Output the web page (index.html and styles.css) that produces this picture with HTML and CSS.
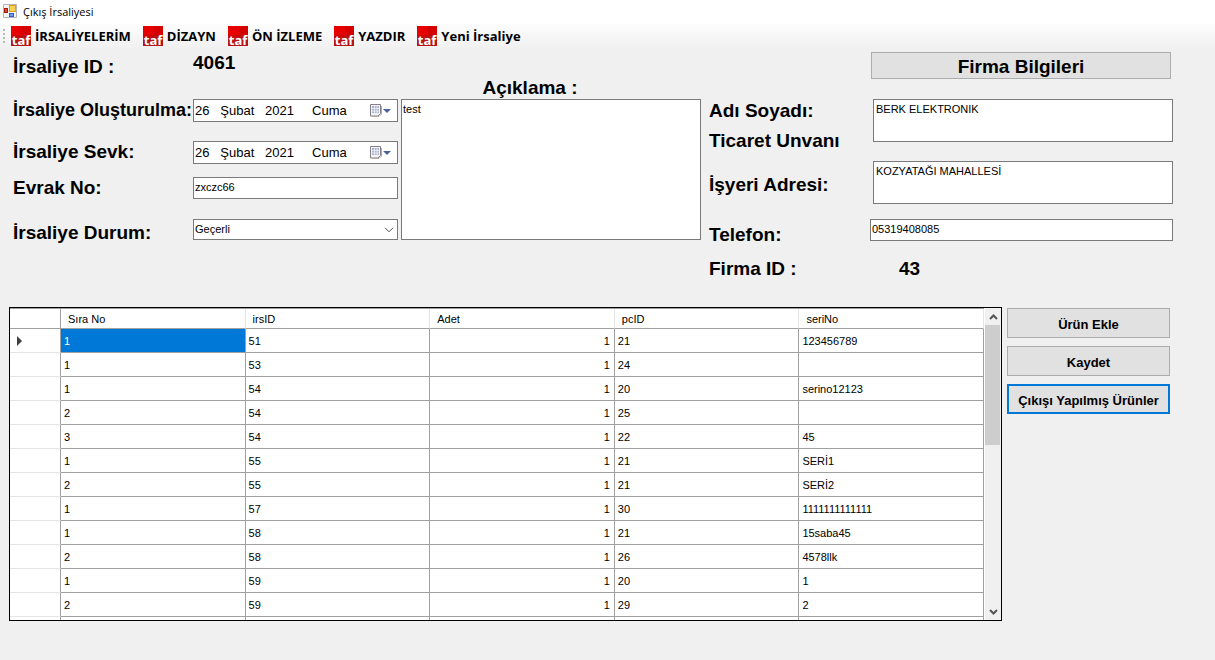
FILE: index.html
```
<!DOCTYPE html>
<html lang="tr">
<head>
<meta charset="utf-8">
<title>Çıkış İrsaliyesi</title>
<link rel="stylesheet" href="styles.css">
</head>
<body>
<svg class="defs" aria-hidden="true">
  <defs>
    <symbol id="taf" viewBox="0 0 20 20">
      <rect width="20" height="20" fill="#e60000"/>
      <path d="M11 0h9v9h-9z" fill="#d40000"/>
      <path d="M0 9h20v11H0z" fill="#b81414"/>
      <path d="M0 9h11v2H0z" fill="#cc0808"/>
      <text x="10" y="19" text-anchor="middle" class="taf-text">taf</text>
    </symbol>
    <symbol id="cal" viewBox="0 0 12 13">
      <path d="M.5.5h10v9l-2.500 2.500H.5z" fill="#f2f2f8" stroke="#85808a"/>
      <path d="M11.500 2v8l-2.500 2.500H2" fill="none" stroke="#b9a99d"/>
      <path d="M2 2h7v7H2z" fill="#a8b4ce"/>
      <path d="M4.500 2v7M7 2v7M2 4.500h7M2 7h7" stroke="#f2f2f8" stroke-width=".8"/>
    </symbol>
  </defs>
</svg>

<header class="titlebar">
  <svg class="app-icon" viewBox="0 0 14 14" aria-hidden="true">
    <path d="M.5.5h13v13H.5z" fill="#f4f4f4" stroke="#b5b5b5"/>
    <path d="M6 1h7v7H6z" fill="#e0a010"/><path d="M7 2h5v5H7z" fill="#fbd254"/>
    <path d="M1 4h4v5H1z" fill="#a81c10"/><path d="M2 5h2v3H2z" fill="#d84838"/>
    <path d="M6 9h5v4H6z" fill="#2a5fd0"/><path d="M7 10h3v2H7z" fill="#6e9cf0"/>
  </svg>
  <h1 class="title">Çıkış İrsaliyesi</h1>
</header>

<nav class="toolbar">
  <span class="grip"></span>
  <button class="tool"><svg class="taf"><use href="#taf"/></svg>İRSALİYELERİM</button>
  <button class="tool"><svg class="taf"><use href="#taf"/></svg>DİZAYN</button>
  <button class="tool"><svg class="taf"><use href="#taf"/></svg>ÖN İZLEME</button>
  <button class="tool"><svg class="taf"><use href="#taf"/></svg>YAZDIR</button>
  <button class="tool"><svg class="taf"><use href="#taf"/></svg>Yeni İrsaliye</button>
</nav>

<main class="main">
  <form class="form">
    <section class="col-left">
      <div class="row row-id"><span class="label">İrsaliye ID :</span><output class="label value-id">4061</output></div>
      <div class="row row-created">
        <label class="label label-long" for="created">İrsaliye Oluşturulma:</label>
        <div class="date"><input id="created" class="date-input" value="26   Şubat   2021     Cuma"><button type="button" class="date-btn" aria-label="Takvim"><svg class="cal"><use href="#cal"/></svg><span class="caret"></span></button></div>
      </div>
      <div class="row row-sent">
        <label class="label" for="sent">İrsaliye Sevk:</label>
        <div class="date"><input id="sent" class="date-input" value="26   Şubat   2021     Cuma"><button type="button" class="date-btn" aria-label="Takvim"><svg class="cal"><use href="#cal"/></svg><span class="caret"></span></button></div>
      </div>
      <div class="row row-doc"><label class="label" for="doc">Evrak No:</label><input id="doc" class="field line" value="zxczc66"></div>
      <div class="row row-state">
        <label class="label" for="state">İrsaliye Durum:</label>
        <div class="select-wrap">
          <select id="state" class="field line select"><option>Geçerli</option></select>
          <svg class="chev" viewBox="0 0 10 6" aria-hidden="true"><path d="M1 .8l4 4 4-4" fill="none" stroke="#555"/></svg>
        </div>
      </div>
    </section>

    <section class="col-mid">
      <label class="label note-label" for="note">Açıklama :</label>
      <textarea id="note" class="field area note">test</textarea>
    </section>

    <section class="col-right">
      <button type="button" class="btn btn-firm">Firma Bilgileri</button>
      <div class="firm-row firm-name">
        <label class="label two" for="name"><span>Adı Soyadı:</span><span>Ticaret Unvanı</span></label>
        <textarea id="name" class="field area short">BERK ELEKTRONIK</textarea>
      </div>
      <div class="firm-row firm-address">
        <label class="label" for="address">İşyeri Adresi:</label>
        <textarea id="address" class="field area short">KOZYATAĞI MAHALLESİ</textarea>
      </div>
      <div class="firm-row firm-phone">
        <label class="label" for="phone">Telefon:</label>
        <input id="phone" class="field line phone" value="05319408085">
      </div>
      <div class="firm-row firm-id"><span class="label">Firma ID :</span><output class="label value-firm">43</output></div>
    </section>
  </form>

  <section class="bottom">
    <div class="grid">
      <div class="grid-view">
        <table class="table">
          <colgroup><col class="col-head"><col><col><col><col><col></colgroup>
          <thead><tr><th></th><th>Sıra No</th><th>irsID</th><th>Adet</th><th>pcID</th><th>seriNo</th></tr></thead>
          <tbody>
            <tr><td><span class="marker"></span></td><td class="selected">1</td><td>51</td><td>1</td><td>21</td><td>123456789</td></tr>
            <tr><td></td><td>1</td><td>53</td><td>1</td><td>24</td><td></td></tr>
            <tr><td></td><td>1</td><td>54</td><td>1</td><td>20</td><td>serino12123</td></tr>
            <tr><td></td><td>2</td><td>54</td><td>1</td><td>25</td><td></td></tr>
            <tr><td></td><td>3</td><td>54</td><td>1</td><td>22</td><td>45</td></tr>
            <tr><td></td><td>1</td><td>55</td><td>1</td><td>21</td><td>SERİ1</td></tr>
            <tr><td></td><td>2</td><td>55</td><td>1</td><td>21</td><td>SERİ2</td></tr>
            <tr><td></td><td>1</td><td>57</td><td>1</td><td>30</td><td>1111111111111</td></tr>
            <tr><td></td><td>1</td><td>58</td><td>1</td><td>21</td><td>15saba45</td></tr>
            <tr><td></td><td>2</td><td>58</td><td>1</td><td>26</td><td>4578llk</td></tr>
            <tr><td></td><td>1</td><td>59</td><td>1</td><td>20</td><td>1</td></tr>
            <tr><td></td><td>2</td><td>59</td><td>1</td><td>29</td><td>2</td></tr>
            <tr><td></td><td></td><td></td><td></td><td></td><td></td></tr>
          </tbody>
        </table>
      </div>
      <div class="scroll">
        <button class="scroll-btn" aria-label="Yukarı"><svg class="arrow" viewBox="0 0 9 6"><path d="M1 5l3.500-3.500L8 5" fill="none" stroke="#555" stroke-width="2"/></svg></button>
        <div class="thumb"></div>
        <button class="scroll-btn scroll-down" aria-label="Aşağı"><svg class="arrow" viewBox="0 0 9 6"><path d="M1 1l3.500 3.500L8 1" fill="none" stroke="#555" stroke-width="2"/></svg></button>
      </div>
    </div>
    <div class="actions">
      <button class="btn">Ürün Ekle</button>
      <button class="btn">Kaydet</button>
      <button class="btn btn-focus">Çıkışı Yapılmış Ürünler</button>
    </div>
  </section>
</main>
</body>
</html>
```
FILE: styles.css
```
* { box-sizing: border-box; }
body {
  margin: 0;
  height: 100vh;
  display: flex;
  flex-direction: column;
  background: #f0f0f0;
  color: #000;
  font: 11px "Liberation Sans", Arial, sans-serif;
}
button, input, select, textarea { font: inherit; color: inherit; margin: 0; border-radius: 0; }
button { padding: 0; border: 0; background: none; }
.defs { position: absolute; width: 0; height: 0; }

.titlebar { display: flex; align-items: center; gap: 6px; height: 24px; padding: 0 3px 2px; background: #fff; flex: none; }
.app-icon { width: 14px; height: 14px; }
.title { margin: 0; font: 11px "Open Sans", sans-serif; }

.toolbar {
  display: flex; align-items: center; gap: 12px; height: 26px; padding: 0 0 2px 3px; flex: none;
  background: linear-gradient(#fdfdfd, #f0f0f0);
}
.grip { width: 2px; height: 14px; margin-right: -6px; background: repeating-linear-gradient(#b8b8b8 0 2px, transparent 2px 4px); }
.tool { display: flex; align-items: center; gap: 4px; font: bold 13px "Open Sans", sans-serif; white-space: nowrap; }
.taf { width: 20px; height: 20px; }
.taf-text { font: bold 13px "Open Sans", sans-serif; fill: #fff; }

.main { flex: 1; min-height: 0; display: flex; flex-direction: column; padding-bottom: 39px; }
.form { display: grid; grid-template-columns: minmax(0, 388fr) minmax(0, 300fr) minmax(0, 472fr); padding: 0 42px 0 13px; height: 257px; flex: none; }
.label { font-weight: bold; font-size: 19px; line-height: 22px; white-space: nowrap; }
.label-long { font-size: 18px; }

.col-left { padding-right: 3px; }
.row { display: grid; grid-template-columns: 180px minmax(0, 1fr); }
.row .label { margin-bottom: -8px; }
.row-id { height: 49px; padding-top: 2px; }
.row-id > span { padding-top: 4px; }
.row-created, .row-sent { height: 23px; }
.row-sent { margin-top: 19px; }
.row-doc { margin-top: 13px; height: 22px; }
.row-state { margin-top: 20px; height: 21px; }
.row-state .label { padding-top: 3px; }

.field { width: 100%; border: 1px solid #7a7a7a; background: #fff; display: block; }
.line { height: 100%; padding: 0 1px 2px; }
.area { padding: 3px 2px; resize: none; line-height: 13px; overflow: hidden; }
.date { display: flex; border: 1px solid #7a7a7a; background: #fff; height: 23px; }
.date-input { flex: 1; min-width: 0; border: 0; padding: 0 1px; background: none; font-size: 13px; }
.date-btn { display: flex; align-items: center; gap: 1px; padding-right: 6px; }
.cal { width: 12px; height: 13px; }
.caret { border: 4px solid transparent; border-top-color: #47639c; border-bottom: 0; }
.select-wrap { position: relative; }
.select { appearance: none; height: 21px; }
.chev { position: absolute; right: 4px; top: 8px; width: 10px; height: 6px; pointer-events: none; }

.col-mid { display: flex; flex-direction: column; padding-top: 27px; }
.note-label { text-align: center; padding-right: 42px; }
.note { height: 141px; padding-left: 1px; }

.col-right { padding: 2px 0 0 8px; }
.btn { height: 30px; border: 1px solid #adadad; background: #e1e1e1; font-weight: bold; font-size: 13px; padding: 2px 0 0; white-space: nowrap; }
.btn-firm { display: block; width: 300px; height: 27px; margin: 0 2px 0 auto; font-size: 19px; line-height: 22px; }
.firm-row { display: grid; grid-template-columns: 164px minmax(0, 1fr); }
.short { height: 43px; }
.firm-name { margin-top: 20px; height: 62px; }
.two { display: flex; flex-direction: column; gap: 8px; padding-top: 1px; }
.firm-address { height: 43px; }
.firm-address .label { padding-top: 13px; }
.firm-phone { height: 22px; margin-top: 15px; grid-template-columns: 161px minmax(0, 1fr); }
.firm-phone .label { padding-top: 5px; }
.phone { height: 22px; }
.firm-id { margin-top: 17px; grid-template-columns: 190px minmax(0, 1fr); }

.bottom { flex: 1; min-height: 0; display: flex; gap: 5px; padding: 0 45px 0 9px; }
.grid { flex: 1; min-width: 0; display: flex; gap: 1px; border: 1px solid #000; background: #fff; }
.grid-view { flex: 1; min-width: 0; overflow: hidden; border-top: 1px solid #a0a0a0; }
.table { width: 100%; table-layout: fixed; border-collapse: separate; border-spacing: 0; }
.col-head { width: 51px; }
.table th { height: 20px; padding: 0 7px; text-align: left; font-weight: normal; border-right: 1px solid #e5e5e5; border-bottom: 1px solid #a0a0a0; }
.table td { height: 24px; padding: 0 3px; border-right: 1px solid #a0a0a0; border-bottom: 1px solid #a0a0a0; }
.table th:first-child { border-right-color: #a0a0a0; }
.table td:first-child { border-bottom-color: #e5e5e5; padding-left: 7px; }
.table td:nth-child(4) { text-align: right; padding-right: 4px; }
.table .selected { background: #0078d7; color: #fff; }
.marker { display: block; width: 0; border: 5px solid transparent; border-left-color: #404040; border-right: 0; }
.scroll { width: 16px; background: #f0f0f0; display: flex; flex-direction: column; }
.scroll-btn { height: 17px; display: grid; place-items: center; }
.scroll-down { margin-top: auto; }
.arrow { width: 9px; height: 6px; }
.thumb { height: 120px; margin-right: 1px; background: #cdcdcd; }
.actions { width: 163px; display: flex; flex-direction: column; gap: 8px; padding-top: 1px; }
.btn-focus { border: 2px solid #0078d7; }
```
